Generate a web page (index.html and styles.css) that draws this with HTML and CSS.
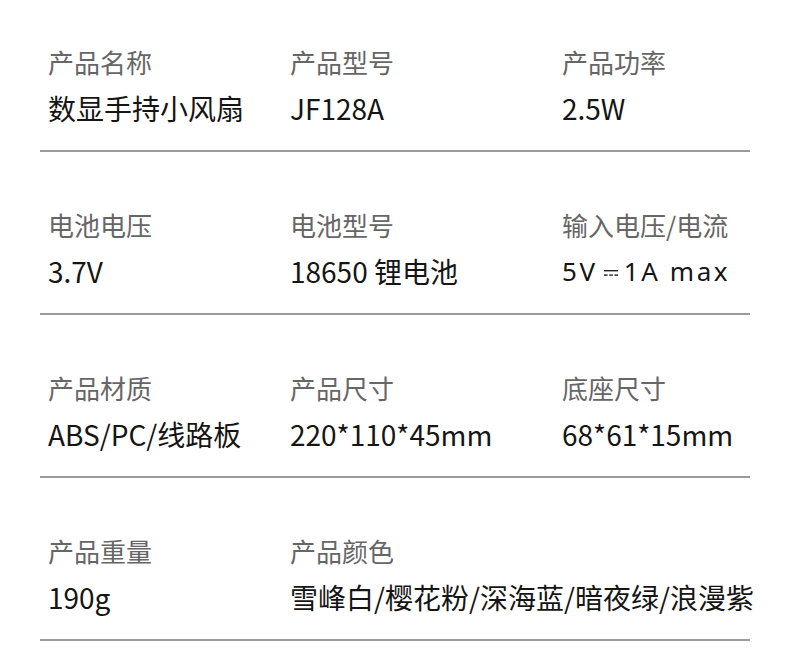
FILE: index.html
```html
<!DOCTYPE html>
<html lang="zh-CN">
<head>
<meta charset="utf-8">
<link rel="stylesheet" href="styles.css">
</head>
<body>
<div class="specs">
  <div class="row">
    <div class="cell"><div class="label">产品名称</div><div class="value">数显手持小风扇</div></div>
    <div class="cell"><div class="label">产品型号</div><div class="value">JF128A</div></div>
    <div class="cell"><div class="label">产品功率</div><div class="value">2.5W</div></div>
  </div>
  <div class="row">
    <div class="cell"><div class="label">电池电压</div><div class="value">3.7V</div></div>
    <div class="cell"><div class="label">电池型号</div><div class="value">18650 锂电池</div></div>
    <div class="cell"><div class="label">输入电压/电流</div><div class="value wide">5V<svg class="dc" viewBox="0 0 14 8" width="14" height="8"><rect x="0" y="0" width="14" height="1.4" fill="#222"/><rect x="0" y="4.4" width="3.6" height="1.4" fill="#222"/><rect x="5.2" y="4.4" width="3.6" height="1.4" fill="#222"/><rect x="10.4" y="4.4" width="3.6" height="1.4" fill="#222"/></svg>1A max</div></div>
  </div>
  <div class="row">
    <div class="cell"><div class="label">产品材质</div><div class="value">ABS/PC/线路板</div></div>
    <div class="cell"><div class="label">产品尺寸</div><div class="value">220*110*45mm</div></div>
    <div class="cell"><div class="label">底座尺寸</div><div class="value">68*61*15mm</div></div>
  </div>
  <div class="row">
    <div class="cell"><div class="label">产品重量</div><div class="value">190g</div></div>
    <div class="cell span2"><div class="label">产品颜色</div><div class="value">雪峰白/樱花粉/深海蓝/暗夜绿/浪漫紫</div></div>
  </div>
</div>
</body>
</html>
```

FILE: styles.css
```css
html, body {
  margin: 0;
  padding: 0;
  background: #ffffff;
}
body {
  width: 790px;
  height: 663px;
  overflow: hidden;
  font-family: "Noto Sans CJK SC", "Noto Sans", sans-serif;
}
.specs {
  padding: 0 40px;
}
.row {
  display: grid;
  grid-template-columns: 242px 272px 1fr;
  padding: 55px 0 24px 8px;
  border-bottom: 2px solid #9b9b9b;
}
.row:first-child {
  padding-top: 44px;
}
.cell.span2 {
  grid-column: span 2;
}
.label {
  font-size: 26px;
  line-height: 36px;
  color: #666666;
  white-space: nowrap;
}
.value {
  margin-top: 10px;
  font-size: 28px;
  line-height: 36px;
  color: #151515;
  white-space: nowrap;
}
.value.wide {
  font-family: "Noto Sans", sans-serif;
  font-size: 26px;
  letter-spacing: 2.6px;
}
.dc {
  display: inline-block;
  vertical-align: middle;
  margin: 0 6px 0 6px;
}
```
